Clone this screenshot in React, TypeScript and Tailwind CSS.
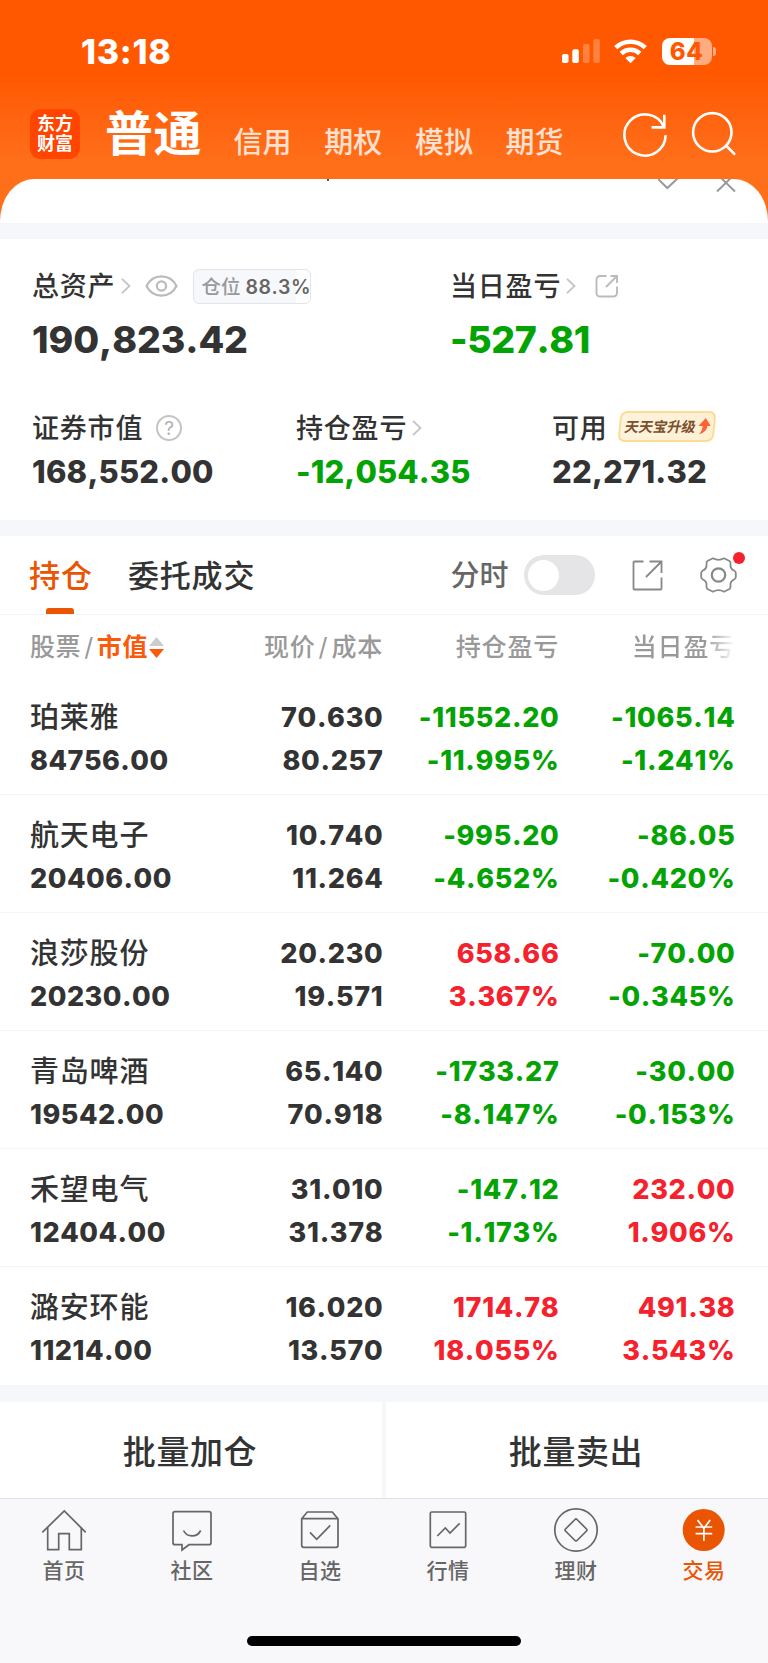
import React from 'react';

const GREEN = "text-[#04a304]";
const RED = "text-[#f5222d]";

const holdings = [
  { name: "珀莱雅", value: "84756.00", price: "70.630", cost: "80.257", total: ["-11552.20", "-11.995%"], day: ["-1065.14", "-1.241%"] },
  { name: "航天电子", value: "20406.00", price: "10.740", cost: "11.264", total: ["-995.20", "-4.652%"], day: ["-86.05", "-0.420%"] },
  { name: "浪莎股份", value: "20230.00", price: "20.230", cost: "19.571", total: ["658.66", "3.367%"], day: ["-70.00", "-0.345%"] },
  { name: "青岛啤酒", value: "19542.00", price: "65.140", cost: "70.918", total: ["-1733.27", "-8.147%"], day: ["-30.00", "-0.153%"] },
  { name: "禾望电气", value: "12404.00", price: "31.010", cost: "31.378", total: ["-147.12", "-1.173%"], day: ["232.00", "1.906%"] },
  { name: "潞安环能", value: "11214.00", price: "16.020", cost: "13.570", total: ["1714.78", "18.055%"], day: ["491.38", "3.543%"] },
];

const navItems = [
  {
    label: "首页",
    icon: (
      <>
        <path d="M2.3 26.3 24.3 5l21.4 21.3" />
        <path d="M7.7 21.5v22.2h11v-16h10.6v16h12V21.5" />
      </>
    ),
  },
  {
    label: "社区",
    icon: (
      <>
        <path d="M7 5.7h34a2 2 0 0 1 2 2v29a2 2 0 0 1-2 2H21L14 44v-5.3H7a2 2 0 0 1-2-2v-29a2 2 0 0 1 2-2z" />
        <path d="M15.5 24.5c3.5 7.2 13.5 7.2 17.2 0" />
      </>
    ),
  },
  {
    label: "自选",
    icon: (
      <>
        <path d="M5.7 12.7 11.3 6h25L42 12.7v26.600a2 2 0 0 1-2 2H7.700a2 2 0 0 1-2-2zM5.700 12.700H42" />
        <path d="m14 26.300 6.700 7L34.300 19.300" />
      </>
    ),
  },
  {
    label: "行情",
    icon: (
      <>
        <rect x="6.3" y="6" width="35.4" height="35.3" rx="1.5" />
        <path d="m13.3 30 8-8 4.7 5 9.7-9.7" />
      </>
    ),
  },
  {
    label: "理财",
    icon: (
      <>
        <circle cx="24" cy="24" r="21.2" />
        <path d="M23 13.5q1-1 2 0l9.5 9.5q1 1 0 2L25 34.5q-1 1-2 0L13.5 25q-1-1 0-2z" />
      </>
    ),
  },
  {
    label: "交易",
    active: true,
    icon: (
      <>
        <circle cx="23.7" cy="24" r="21" fill="#ea5504" stroke="none" />
        <path d="m17.5 14 6.4 8.3L30.2 14M15.6 21h16.6M15.6 27.7h16.6M23.9 22v13" stroke="#fff" />
      </>
    ),
  },
];

function Chevron() {
  return (
    <svg className="h-[16px] w-[10px]" viewBox="0 0 10 16" fill="none" stroke="#c4c4c4" strokeWidth="1.8">
      <path d="m1 .8 7.5 7.2L1 15.2" />
    </svg>
  );
}

function StatusBar() {
  return (
    <div className="flex h-[98px] items-start justify-between pl-[81px] pr-[52px] pt-[31px]">
      <span className="text-[34px] font-extrabold leading-[41px] tracking-[0.7px]">13:18</span>
      <div className="flex items-center pt-[4px]">
        <svg className="h-[32px] w-[40px]" viewBox="0 0 40 32" fill="#fff">
          <rect x="1" y="19" width="6.5" height="9" rx="1.8" />
          <rect x="11.3" y="14.3" width="6.5" height="13.7" rx="1.8" />
          <rect x="22" y="9" width="6.5" height="19" rx="1.8" opacity=".25" />
          <rect x="32.3" y="4" width="6.5" height="24" rx="1.8" opacity=".25" />
        </svg>
        <svg className="ml-[13px] h-[32px] w-[33px]" viewBox="0 0 33 32" fill="none" stroke="#fff" strokeWidth="4.6">
          <path d="M1.7 12.7a21.3 21.3 0 0 1 29.6 0" />
          <path d="M7.2 18.5a13.4 13.4 0 0 1 18.6 0" />
          <path d="m16.5 28.3-5.2-5.2a7.3 7.3 0 0 1 10.4 0z" fill="#fff" stroke="none" />
        </svg>
        <div className="ml-[15px] flex h-[27px] w-[50px] items-center justify-center rounded-[8px] bg-linear-to-r from-white from-64% to-white/50 to-64%">
          <span className="text-[24px] font-extrabold leading-[27px] tracking-[0.5px] text-[#ff5800]">64</span>
        </div>
        <div className="ml-[1.5px] h-[9px] w-[3px] rounded-r-full bg-white/50" />
      </div>
    </div>
  );
}

function Header() {
  return (
    <header className="h-[223px] bg-linear-to-b from-[#ff5800] from-[75px] to-[#ff6f1a] to-[165px] text-white">
      <StatusBar />
      <div className="flex h-[81px] items-start pl-[30px]">
        <div className="mt-[11px] flex h-[50px] w-[50px] flex-col items-center justify-center rounded-[11px] bg-[#ff4500] text-[18px] font-bold leading-[20px]">
          <span>东方</span>
          <span>财富</span>
        </div>
        <span className="ml-[25px] mt-[4px] text-[48px] font-bold leading-[64px] tracking-[0.5px]">普通</span>
        <div className="ml-[31.5px] mt-[24px] flex gap-[32px] text-[29px] font-medium leading-[42px] text-white/80">
          {["信用", "期权", "模拟", "期货"].map((item) => (
            <span key={item} className="w-[58.7px] whitespace-nowrap">{item}</span>
          ))}
        </div>
        <svg className="ml-auto mt-[12.5px] h-[48px] w-[48px]" viewBox="0 0 48 48" fill="none" stroke="#fff" strokeWidth="2.6">
          <path d="M44.6 24.3A20.6 20.6 0 1 1 42.8 15.6" />
          <path d="M43.3 3.7v12.7H30.6" />
        </svg>
        <svg className="ml-[22px] mr-[29.5px] mt-[12.5px] h-[48px] w-[48px]" viewBox="0 0 48 48" fill="none" stroke="#fff" strokeWidth="2.6">
          <circle cx="21.3" cy="21.3" r="19.2" />
          <path d="m34.5 34 9.5 9.7" />
        </svg>
      </div>
      {/* notice strip scrolled under the header */}
      <div className="flex h-[44px] items-start bg-white [border-radius:34px_34px_0_0/42px_42px_0_0]">
        <span className="ml-[327px] h-[2px] w-[2px] bg-[#555]" />
        <svg className="ml-auto h-[16px] w-[80px] mr-[30px]" viewBox="0 0 80 16" fill="none" stroke="#999" strokeWidth="2">
          <path d="m-1 -1 10.3 10L20 -1" />
          <path d="m59-5 18 17.5M77-5 59 12.5" />
        </svg>
      </div>
    </header>
  );
}

function Assets() {
  return (
    <section className="mt-[16px] h-[281px] bg-white pl-[32px] pt-[27px]">
      <div className="flex">
        <div className="w-[418px]">
          <div className="flex h-[40px] items-center">
            <span className="text-[27px] font-medium leading-[40px] pt-[1px] tracking-[0.8px]">总资产</span>
            <div className="ml-[6px]"><Chevron /></div>
            <svg className="ml-[14px] h-[24px] w-[33px]" viewBox="0 0 33 24" fill="none" stroke="#bbb" strokeWidth="2.2">
              <path d="M1.5 12C8-.8 25-.8 31.5 12 25 24.8 8 24.8 1.5 12z" />
              <circle cx="16.5" cy="12" r="4.6" />
            </svg>
            <div className="ml-[15px] flex h-[35px] w-[118px] items-center whitespace-nowrap rounded-[6px] border border-[#e3e4e8] bg-linear-to-r from-[#f7f8fb] from-88% to-white to-88% pl-[7px] text-[19.5px] leading-[33px]">
              <span className="pt-[2px] font-medium text-[#999]">仓位</span>
              <span className="ml-[5px] pt-[2px] font-semibold tracking-[0.5px] text-[#666]">88.3%</span>
            </div>
          </div>
          <p className="mt-[4px] text-[37.5px] font-extrabold leading-[60px] tracking-[-0.1px]">190,823.42</p>
        </div>
        <div>
          <div className="flex h-[40px] items-center">
            <span className="text-[27px] font-medium leading-[40px] pt-[1px] tracking-[0.8px]">当日盈亏</span>
            <div className="ml-[5px]"><Chevron /></div>
            <svg className="ml-[19px] h-[24px] w-[24px]" viewBox="0 0 24 24" fill="none" stroke="#bbb" strokeWidth="1.9">
              <path d="M11.5 2H5a3.5 3.5 0 0 0-3.5 3.5V19A3.5 3.5 0 0 0 5 22.5h13.5A3.5 3.5 0 0 0 22 19v-6.5" />
              <path d="M15.5 2H22v7M22 2 11 13" />
            </svg>
          </div>
          <p className={`mt-[4px] text-[37.5px] font-extrabold leading-[60px] tracking-[-0.4px] ${GREEN}`}>-527.81</p>
        </div>
      </div>
      <div className="mt-[38px] flex">
        <div className="w-[264px]">
          <div className="flex h-[40px] items-center">
            <span className="text-[27px] font-medium leading-[40px] pt-[1px] tracking-[0.8px]">证券市值</span>
            <span className="ml-[13px] flex h-[26px] w-[26px] items-center justify-center rounded-full border-2 border-[#c4c4c4] text-[19px] leading-none text-[#b0b0b0]">?</span>
          </div>
          <p className="text-[31px] font-extrabold leading-[48px] tracking-[0.2px]">168,552.00</p>
        </div>
        <div className="w-[256px]">
          <div className="flex h-[40px] items-center">
            <span className="text-[27px] font-medium leading-[40px] pt-[1px] tracking-[0.8px]">持仓盈亏</span>
            <div className="ml-[5px]"><Chevron /></div>
          </div>
          <p className={`text-[31px] font-extrabold leading-[48px] tracking-[0.1px] ${GREEN}`}>-12,054.35</p>
        </div>
        <div>
          <div className="flex h-[40px] items-center">
            <span className="text-[27px] font-medium leading-[40px] pt-[1px] tracking-[0.8px]">可用</span>
            <div className="-mt-[3px] ml-[11px] flex h-[31px] w-[96px] -skew-x-6 items-center rounded-[7px] border-2 border-[#fbdc95] bg-linear-to-r from-[#fff3dc] to-[#fff0d2] pl-[4px]">
              <span className="-skew-x-6 whitespace-nowrap text-[14.2px] font-bold leading-[27px] text-[#7a5030]">天天宝升级</span>
              <svg className="ml-[2px] h-[17px] w-[13px]" viewBox="0 0 13 18">
                <path d="M7 0 13 8.5H9.5Q9.5 15 1.5 17.5 5 13 4.5 8.5H0z" fill="#fc6436" />
              </svg>
            </div>
          </div>
          <p className="text-[31px] font-extrabold leading-[48px] tracking-[0.2px]">22,271.32</p>
        </div>
      </div>
    </section>
  );
}

function Tabs() {
  return (
    <div className="mt-[16px] flex h-[79px] border-b border-[#f3f4f6] bg-white pl-[29px] text-[31px] font-medium leading-[79px]">
      <div className="flex w-[99px] flex-col text-[#ea5504]">
        <span className="h-[72px] tracking-[1px]">持仓</span>
        <span className="ml-[17px] h-[6px] w-[28px] rounded-t-[3px] bg-[#ea5504]" />
      </div>
      <span className="tracking-[0.8px]">委托成交</span>
      <span className="ml-auto text-[29px] text-[#666]">分时</span>
      <div className="ml-[15px] mt-[19px] flex h-[40px] w-[71px] items-center rounded-full bg-[#e5e5e8] pl-[4px]">
        <span className="h-[31px] w-[31px] rounded-full bg-white" />
      </div>
      <svg className="ml-[36.5px] mt-[23px] h-[32px] w-[32px]" viewBox="0 0 32 32" fill="none" stroke="#888" strokeWidth="1.8">
        <path d="M12.5 2.5h-9a1 1 0 0 0-1 1v26a1 1 0 0 0 1 1h26a1 1 0 0 0 1-1v-11" />
        <path d="M18.5 2.5h12V14M30.5 2.5 15 18" />
      </svg>
      <div className="relative ml-[37px] mr-[31px] mt-[20px] h-[38px] w-[37px]">
        <svg className="h-[38px] w-[37px]" viewBox="0 0 37 38" fill="none" stroke="#888" strokeWidth="1.8" strokeLinejoin="round">
          <circle cx="18.5" cy="19" r="6.7" strokeWidth="2.2" />
          <path d="M13 2.3Q18.5 5.5 24 2.3L29.5 5Q30.8 6 30.5 8.5 30 12.5 34 14.5 35.8 15.5 35.8 17V21Q35.8 22.5 34 23.5 30 25.5 30.5 29.5 30.8 32 29.5 33L24 35.7Q18.5 32.5 13 35.7L7.5 33Q6.2 32 6.5 29.5 7 25.5 3 23.5 1.2 22.5 1.2 21V17Q1.2 15.5 3 14.5 7 12.5 6.5 8.5 6.2 6 7.5 5z" />
        </svg>
        <span className="absolute -right-[8px] -top-[4px] h-[12px] w-[12px] rounded-full bg-[#f5222d]" />
      </div>
    </div>
  );
}

function Pair({ values }: { values: string[] }) {
  return (
    <div className={values[0].startsWith("-") ? GREEN : RED}>
      <p>{values[0]}</p>
      <p>{values[1]}</p>
    </div>
  );
}

function Holdings() {
  return (
    <section className="h-[770px] bg-white">
      <div className="grid h-[62px] grid-cols-[177px_176px_176px_176px] pl-[30px] text-right text-[25px] leading-[64px] text-[#999]">
        <div className="flex items-center font-medium tracking-[0.6px]">
          <span>股票</span>
          <span className="mx-[3px] font-normal">/</span>
          <span className="font-bold text-[#fa5a0a]">市值</span>
          <svg className="ml-[1px] h-[21px] w-[15px]" viewBox="0 0 15 21">
            <path d="M7.5 0 15 9H0z" fill="#ccc" />
            <path d="M7.5 21 15 12H0z" fill="#fa5a0a" />
          </svg>
        </div>
        <span className="font-medium tracking-[0.8px]">现价<span className="mx-[3px] font-normal">/</span>成本</span>
        <span className="font-medium tracking-[0.8px]">持仓盈亏</span>
        <span className="bg-linear-to-r from-[#999] from-83% to-white bg-clip-text font-medium tracking-[0.8px] text-transparent">当日盈亏</span>
      </div>
      {holdings.map((h) => (
        <div
          key={h.name}
          className="grid h-[118px] grid-cols-[177px_176.5px_176px_176px] border-b border-[#f3f4f6] pl-[30px] pt-[19px] text-right text-[27px] font-extrabold leading-[43px] tracking-[0.7px] last:border-b-0"
        >
          <div className="text-left">
            <p className="whitespace-nowrap text-[29px] font-medium tracking-[0.8px]">{h.name}</p>
            <p className="tracking-[0.5px]">{h.value}</p>
          </div>
          <div>
            <p>{h.price}</p>
            <p>{h.cost}</p>
          </div>
          <Pair values={h.total} />
          <Pair values={h.day} />
        </div>
      ))}
    </section>
  );
}

export default function App() {
  return (
    <div className="h-[1663px] w-[768px] overflow-hidden bg-[#f6f7fa] font-['Inter','Noto_Sans_CJK_SC',sans-serif] text-[#333] [font-kerning:none]">
      <Header />
      <Assets />
      <Tabs />
      <Holdings />
      <div className="mt-[17px] grid h-[96px] grid-cols-2 gap-[4px] text-center text-[33px] font-medium leading-[94px] tracking-[0.6px]">
        <button className="h-[96px] bg-white pt-[3px] pr-[2px]">批量加仓</button>
        <button className="h-[96px] bg-white pt-[3px] pr-[2px]">批量卖出</button>
      </div>
      <nav className="grid h-[165px] grid-cols-6 border-t border-[#dfe1e6] bg-[#f8f8fb] pt-[7px]">
        {navItems.map((item) => (
          <div key={item.label} className="flex flex-col items-center">
            <svg className="h-[48px] w-[48px]" viewBox="0 0 48 48" fill="none" stroke="#666" strokeWidth="1.7">
              {item.icon}
            </svg>
            <span className={`mt-[2px] text-[21px] font-medium leading-[30px] tracking-[0.5px] ${item.active ? "text-[#ea5504]" : "text-[#666]"}`}>
              {item.label}
            </span>
          </div>
        ))}
        <div className="col-span-6 mx-auto mb-[17px] h-[10px] w-[274px] self-end rounded-full bg-black" />
      </nav>
    </div>
  );
}
